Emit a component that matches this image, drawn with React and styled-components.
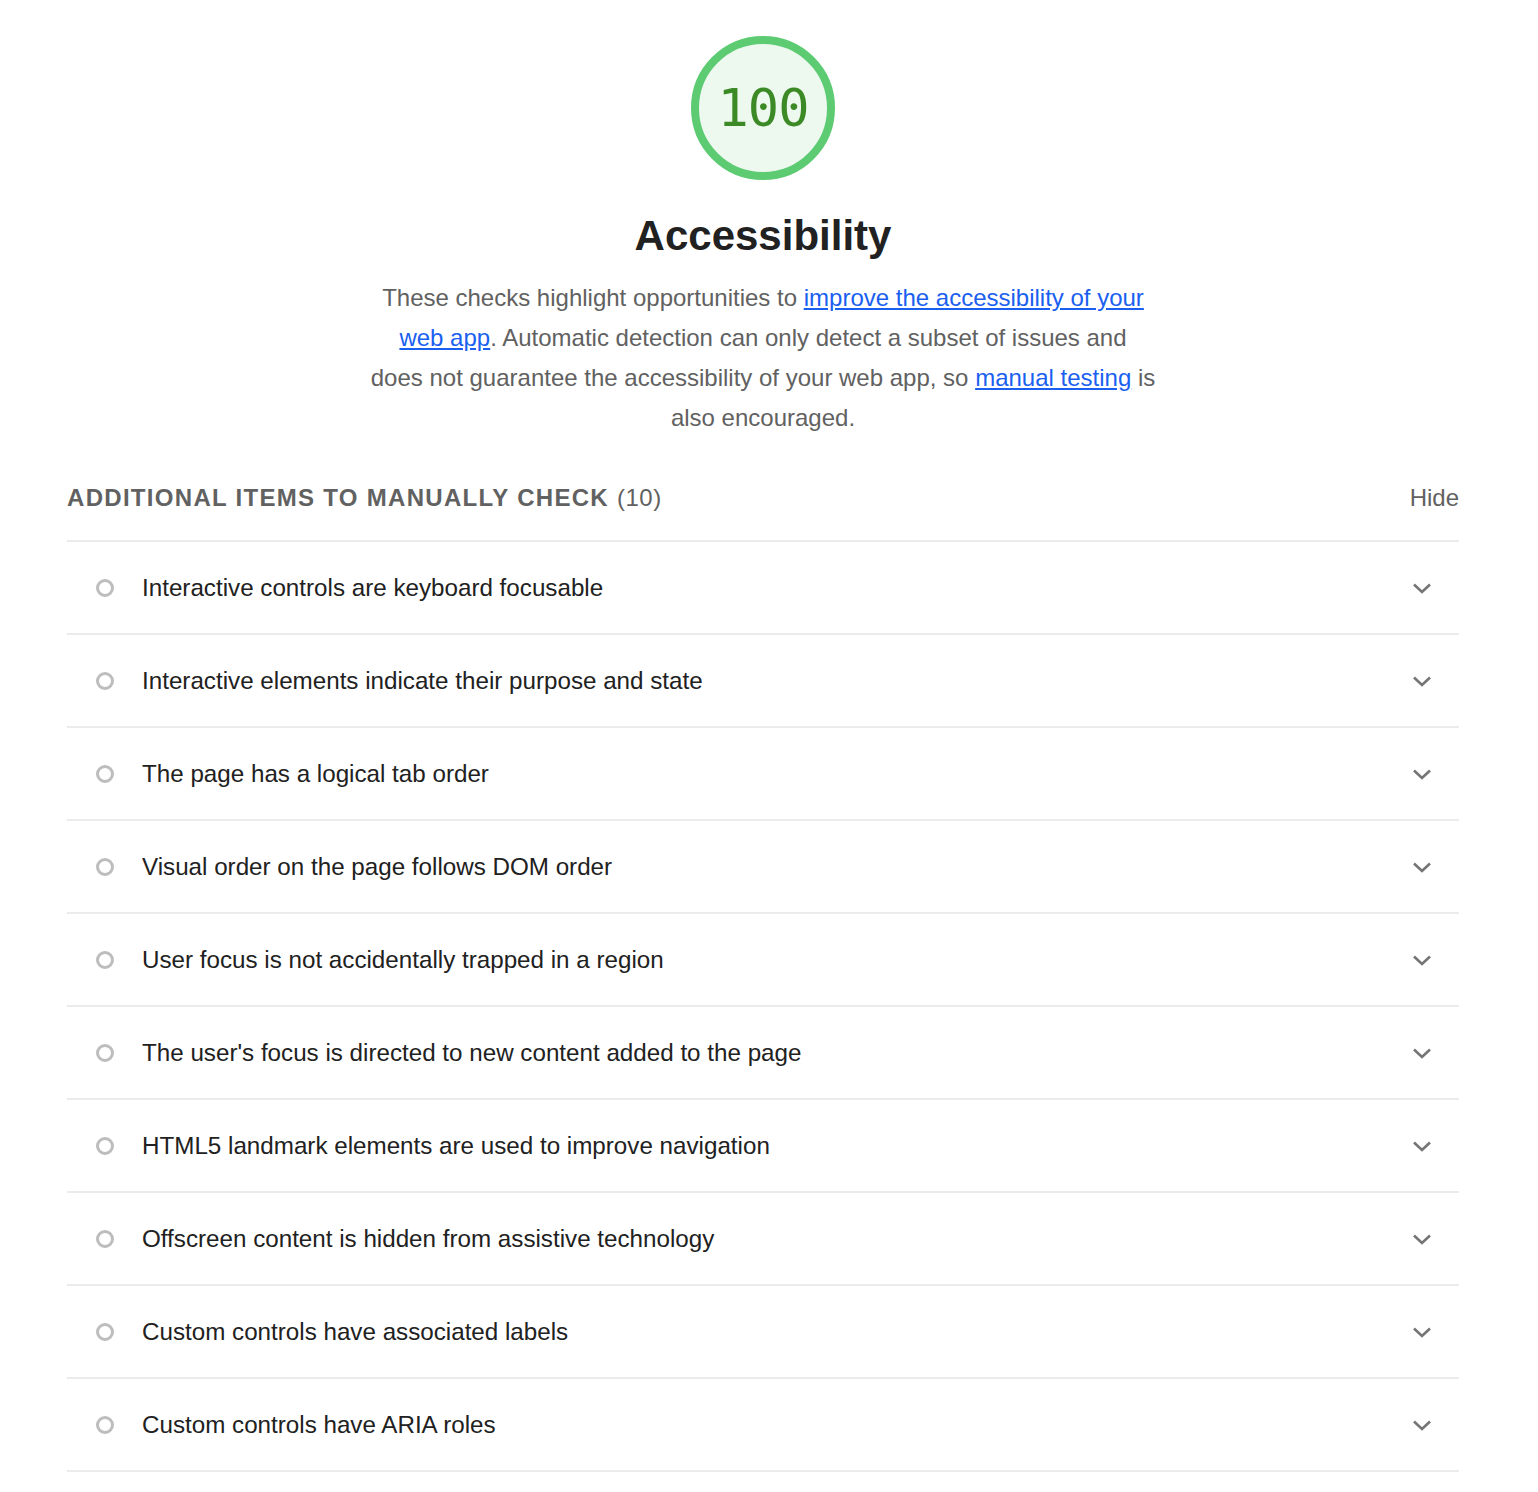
import React from 'react'
import styled, { createGlobalStyle } from 'styled-components'

const GlobalStyle = createGlobalStyle`
  body {
    margin: 0;
    background: #fff;
    font-family: "Liberation Sans", Arial, sans-serif;
  }
`

const Page = styled.div`
  width: 1392px;
  padding: 36px 0 20px 67px;
`

const Header = styled.div`
  display: flex;
  flex-direction: column;
  align-items: center;
`

const Gauge = styled.div`
  width: 128px;
  height: 128px;
  border-radius: 50%;
  border: 8px solid #5ccb72;
  background: #edf8ef;
  display: flex;
  align-items: center;
  justify-content: center;
`

const Score = styled.span`
  font-family: "DejaVu Sans Mono", "Liberation Mono", monospace;
  font-size: 52px;
  color: #3b8a25;
  letter-spacing: -1px;
`

const Title = styled.h1`
  margin: 28px 0 0;
  font-size: 42px;
  line-height: 56px;
  font-weight: 700;
  color: #212121;
`

const Description = styled.p`
  margin: 14px 0 0;
  width: 790px;
  text-align: center;
  font-size: 24px;
  line-height: 40px;
  color: #616161;
`

const Link = styled.a`
  color: #1a5ff0;
  text-decoration: underline;
`

const Section = styled.div`
  margin-top: 38px;
`

const SectionHead = styled.div`
  display: flex;
  justify-content: space-between;
  align-items: center;
  height: 44px;
  padding-bottom: 20px;
  border-bottom: 2px solid #ebebeb;
`

const SectionTitle = styled.div`
  font-size: 24px;
  font-weight: 700;
  letter-spacing: 1.3px;
  text-transform: uppercase;
  color: #616161;
`

const Count = styled.span`
  font-weight: 400;
  letter-spacing: 0.5px;
`

const Toggle = styled.span`
  font-size: 24px;
  color: #616161;
`

const Row = styled.div`
  display: flex;
  align-items: center;
  height: 91px;
  border-bottom: 2px solid #ebebeb;
  padding: 0 27px 0 29px;
`

const Marker = styled.span`
  width: 12px;
  height: 12px;
  border-radius: 50%;
  border: 3.5px solid #bdbdbd;
  flex-shrink: 0;
`

const Label = styled.span`
  flex: 1;
  margin-left: 28px;
  font-size: 24.2px;
  color: #212121;
`

const Chevron = () => (
  <svg width="20" height="14" viewBox="0 0 20 14">
    <path d="M2 3.5 L10 11 L18 3.5" fill="none" stroke="#757575" strokeWidth="2.6" />
  </svg>
)

const items = [
  'Interactive controls are keyboard focusable',
  'Interactive elements indicate their purpose and state',
  'The page has a logical tab order',
  'Visual order on the page follows DOM order',
  'User focus is not accidentally trapped in a region',
  "The user's focus is directed to new content added to the page",
  'HTML5 landmark elements are used to improve navigation',
  'Offscreen content is hidden from assistive technology',
  'Custom controls have associated labels',
  'Custom controls have ARIA roles',
]

const App = () => {
  return (
    <>
      <GlobalStyle />
      <Page>
        <Header>
          <Gauge>
            <Score>100</Score>
          </Gauge>
          <Title>Accessibility</Title>
          <Description>
            These checks highlight opportunities to{' '}
            <Link href="#">improve the accessibility of your web app</Link>. Automatic
            detection can only detect a subset of issues and does{'\u00a0'}not guarantee the
            accessibility of your web app, so <Link href="#">manual testing</Link> is also
            encouraged.
          </Description>
        </Header>
        <Section>
          <SectionHead>
            <SectionTitle>
              Additional items to manually check <Count>(10)</Count>
            </SectionTitle>
            <Toggle>Hide</Toggle>
          </SectionHead>
          {items.map((text) => (
            <Row key={text}>
              <Marker />
              <Label>{text}</Label>
              <Chevron />
            </Row>
          ))}
        </Section>
      </Page>
    </>
  )
}

export default App
